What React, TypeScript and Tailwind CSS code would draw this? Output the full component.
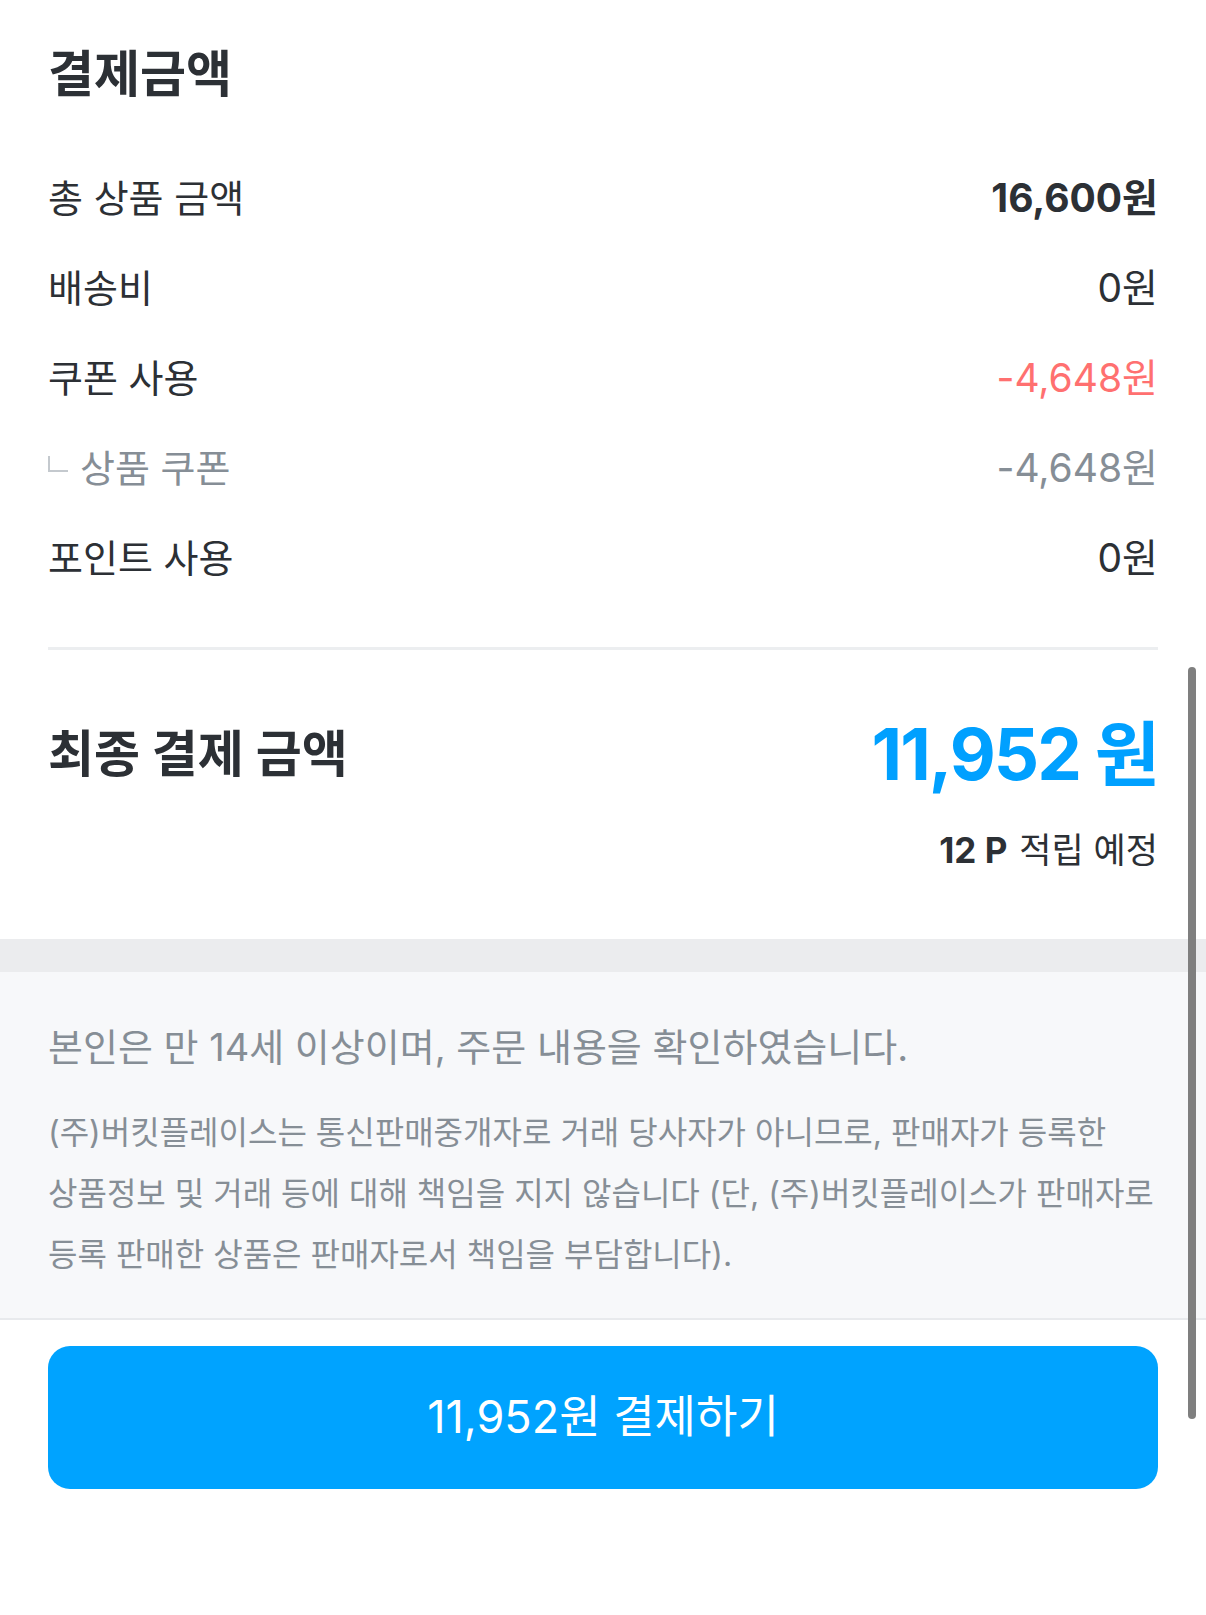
import React from 'react';

interface Row {
  label: string;
  value: string;
  tone?: 'bold' | 'red' | 'sub';
}

const rows: Row[] = [
  { label: '총 상품 금액', value: '16,600원', tone: 'bold' },
  { label: '배송비', value: '0원' },
  { label: '쿠폰 사용', value: '-4,648원', tone: 'red' },
  { label: '상품 쿠폰', value: '-4,648원', tone: 'sub' },
  { label: '포인트 사용', value: '0원' },
];

const font = { fontFamily: '"Inter", "Noto Sans CJK KR", sans-serif' };

export default function App() {
  return (
    <div className="relative min-h-[1615px] w-full bg-white text-[#2c3035]" style={font}>
      {/* 결제금액 */}
      <div className="px-[48px]">
        <h1 className="pt-[44px] text-[50px] font-bold leading-[60px]">결제금액</h1>

        <div className="mt-[49px]">
          {rows.map((r) => (
            <div key={r.label} className="flex h-[90px] items-center justify-between">
              {r.tone === 'sub' ? (
                <div className="flex items-center text-[38px] text-[#868e96]">
                  <span className="mr-[12px] mb-[8px] inline-block h-[16px] w-[20px] border-b-2 border-l-2 border-[#c4c9ce]" />
                  <span>{r.label}</span>
                </div>
              ) : (
                <span className="text-[38px]">{r.label}</span>
              )}
              <span
                className={`text-[39px] ${
                  r.tone === 'bold'
                    ? 'font-bold'
                    : r.tone === 'red'
                      ? 'text-[#ff7070]'
                      : r.tone === 'sub'
                        ? 'text-[#868e96]'
                        : ''
                }`}
              >
                {r.value}
              </span>
            </div>
          ))}
        </div>

        <div className="mt-[44px] h-[3px] bg-[#eceef0]" />

        {/* 최종 결제 금액 */}
        <div className="flex items-center justify-between pt-[54px]">
          <span className="text-[50px] font-bold">최종 결제 금액</span>
          <span className="text-[71px] font-bold leading-[100px] tracking-[-2px] text-[#00a0ff]">11,952 원</span>
        </div>
        <div className="mt-[20px] flex justify-end text-[35px]">
          <span className="font-bold">12 P</span>
          <span className="ml-[12px]">적립 예정</span>
        </div>
      </div>

      <div className="mt-[62px] h-[33px] bg-[#ebecee]" />

      {/* 안내 */}
      <div className="border-b-2 border-[#e8eaed] bg-[#f7f8fa] px-[48px] pt-[50px] pb-[33px] text-[#868e96]">
        <p className="text-[38px] leading-[50px]">본인은 만 14세 이상이며, 주문 내용을 확인하였습니다.</p>
        <p className="mt-[30px] text-[32px] leading-[61px]">
          (주)버킷플레이스는 통신판매중개자로 거래 당사자가 아니므로, 판매자가 등록한
          <br />
          상품정보 및 거래 등에 대해 책임을 지지 않습니다 (단, (주)버킷플레이스가 판매자로
          <br />
          등록 판매한 상품은 판매자로서 책임을 부담합니다).
        </p>
      </div>

      <div className="px-[48px] pt-[26px]">
        <button className="flex h-[143px] w-full items-center justify-center rounded-[22px] bg-[#00a3ff] text-[45px] text-white">
          11,952원 결제하기
        </button>
      </div>

      {/* overlay scrollbar */}
      <div className="absolute top-[667px] right-[10px] h-[752px] w-[8px] rounded-full bg-[#7f7f7f]" />
    </div>
  );
}
